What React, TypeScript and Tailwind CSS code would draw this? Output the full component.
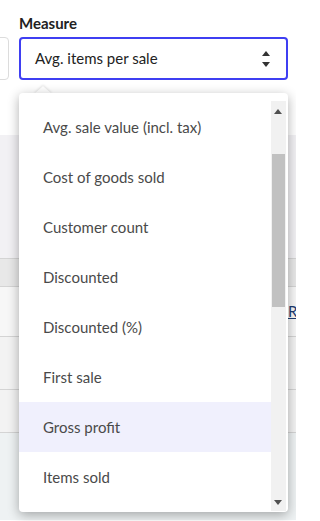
import React from "react";

const options = [
  "Avg. sale value (incl. tax)",
  "Cost of goods sold",
  "Customer count",
  "Discounted",
  "Discounted (%)",
  "First sale",
  "Gross profit",
  "Items sold",
];

function Triangle({ up }: { up?: boolean }) {
  return (
    <svg width="8" height="5" viewBox="0 0 8 5" className="block">
      <path d={up ? "M0 5 L4 0 L8 5 Z" : "M0 0 L8 0 L4 5 Z"} fill="currentColor" />
    </svg>
  );
}

export default function App() {
  return (
    <div className="relative h-[521px] w-[296px] overflow-hidden bg-white font-['Lato','Liberation_Sans',sans-serif]">
      {/* page behind */}
      <div className="flex h-[135px] flex-col bg-white">
        <label className="mt-[14px] pl-[19px] text-[15px] font-bold leading-[18px] text-[#222]">Measure</label>
        <div className="mt-[5px] flex gap-[10px]">
          <div className="-ml-[31px] h-[43px] w-[40px] shrink-0 rounded-[4px] border border-[#dcdcdc] bg-white" />
          <div className="flex h-[43px] w-[269px] shrink-0 items-center justify-between rounded-[4px] border-2 border-[#3f3ff2] pl-[14px] pr-[16px]">
            <span className="text-[15px] text-[#222]">Avg. items per sale</span>
            <div className="flex flex-col gap-[6px] text-[#333]">
              <Triangle up />
              <Triangle />
            </div>
          </div>
        </div>
      </div>
      <div className="h-[123px] bg-[#f2f1f4]" />
      <div className="h-[29px] border-y border-[#d4d4d4] bg-[#e8e8e8]" />
      <div className="flex h-[49px] items-center bg-[#f7f7f7] pl-[288px]">
        <span className="text-[15px] leading-none text-[#1c3a70] underline">R</span>
      </div>
      <div className="h-[54px] border-y border-[#d4d4d4] bg-[#f3f3f3]" />
      <div className="h-[43px] border-b border-[#d4d4d4] bg-[#f3f3f3]" />
      <div className="h-[87px] bg-[#eef2f3]" />

      {/* dropdown caret */}
      <svg width="18" height="9" viewBox="0 0 18 9" className="absolute left-[34px] top-[85px] drop-shadow-[0_-1px_1px_rgba(0,0,0,0.12)]">
        <path d="M0 9 L9 1 L18 9 Z" fill="#fff" />
      </svg>

      {/* dropdown menu */}
      <div className="absolute left-[19px] top-[93px] h-[419px] w-[269px] overflow-hidden rounded-[4px] bg-white shadow-[0_3px_12px_rgba(0,0,0,0.32)]">
        <ul className="mt-[9px] mr-[17px] flex flex-col">
          {options.map((o) => (
            <li
              key={o}
              className={`flex h-[50px] shrink-0 items-center pl-[24px] text-[15px] text-[#4a4a4a] ${
                o === "Gross profit" ? "bg-[#f0f0fd]" : ""
              }`}
            >
              {o}
            </li>
          ))}
        </ul>
        <div className="absolute right-[2px] top-[8px] bottom-[1px] w-[15px] bg-[#f1f1f1]">
          <div className="absolute left-[3px] top-[8px] text-[#505050]">
            <Triangle up />
          </div>
          <div className="absolute left-[1px] right-[1px] top-[53px] h-[153px] bg-[#c1c1c1]" />
          <div className="absolute bottom-[6px] left-[3px] text-[#505050]">
            <Triangle />
          </div>
        </div>
      </div>
    </div>
  );
}
